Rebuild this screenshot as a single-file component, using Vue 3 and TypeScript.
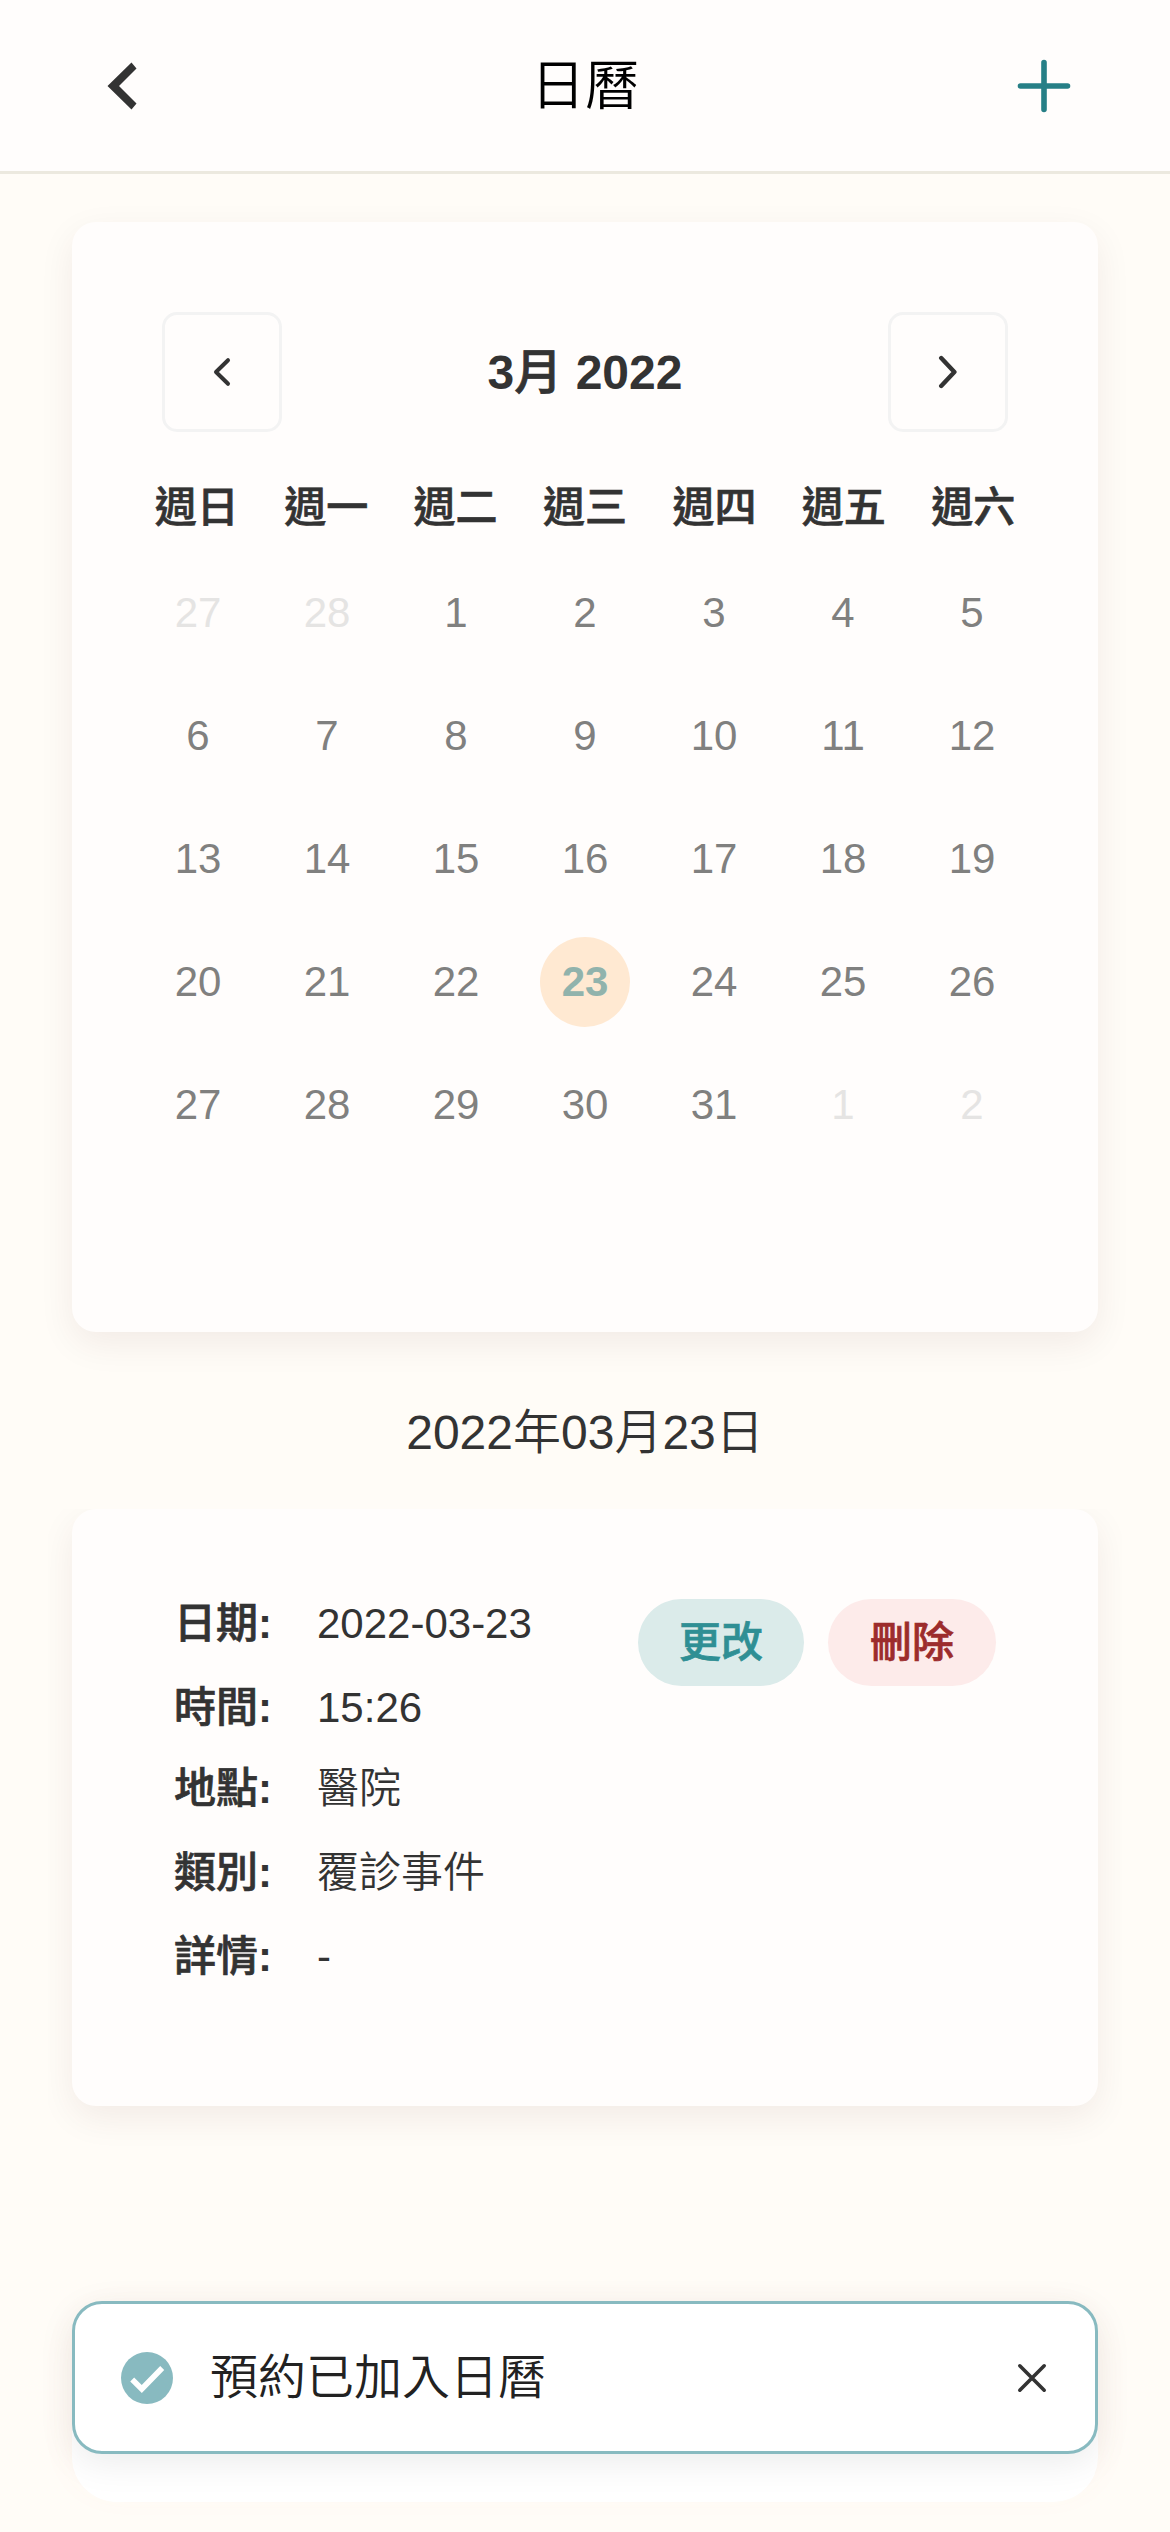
<script setup lang="ts">
interface Day {
  key: string
  label: number
  outside: boolean
  selected: boolean
}

interface Detail {
  label: string
  value: string
}

const weekdays: string[] = ['週日', '週一', '週二', '週三', '週四', '週五', '週六']

// March 2022 starts on a Tuesday, so the grid opens with two days of February.
const days: Day[] = Array.from({ length: 35 }, (_, i) => {
  const date = new Date(2022, 1, 27 + i)
  const outside = date.getMonth() !== 2
  return {
    key: `${date.getMonth()}-${date.getDate()}`,
    label: date.getDate(),
    outside,
    selected: !outside && date.getDate() === 23,
  }
})

const details: Detail[] = [
  { label: '日期', value: '2022-03-23' },
  { label: '時間', value: '15:26' },
  { label: '地點', value: '醫院' },
  { label: '類別', value: '覆診事件' },
  { label: '詳情', value: '-' },
]
</script>

<template>
  <div class="screen">
    <header class="topbar">
      <svg class="back" viewBox="0 0 30 48" width="30" height="48">
        <path d="M24.5 0.5 L29.5 6.5 L12 24 L29.5 41.5 L24.5 47.5 L0.5 24 Z" fill="#333" />
      </svg>
      <h1 class="title">日曆</h1>
      <svg class="add" viewBox="0 0 54 54" width="54" height="54">
        <path d="M27 3.5V50.5M3.5 27H50.5" stroke="#267f86" stroke-width="5.6" stroke-linecap="round" />
      </svg>
    </header>

    <section class="card calendar">
      <div class="month-bar">
        <button class="nav" type="button">
          <svg viewBox="0 0 20 32" width="20" height="32">
            <path d="M16 4.2 L4 16 L16 27.8" fill="none" stroke="#333" stroke-width="4" stroke-linecap="round" stroke-linejoin="round" />
          </svg>
        </button>
        <h2 class="month">3<span class="han">月</span> 2022</h2>
        <button class="nav" type="button">
          <svg viewBox="0 0 20 34" width="20" height="34">
            <path d="M3.2 3 L16.4 17 L3.2 31" fill="none" stroke="#333" stroke-width="4.4" stroke-linecap="round" stroke-linejoin="round" />
          </svg>
        </button>
      </div>
      <div class="weekdays">
        <span v-for="name in weekdays" :key="name" class="han">{{ name }}</span>
      </div>
      <div class="days">
        <div v-for="day in days" :key="day.key" class="cell">
          <span class="day" :class="{ outside: day.outside, selected: day.selected }">{{ day.label }}</span>
        </div>
      </div>
    </section>

    <p class="date">2022年03月23日</p>

    <div class="events">
      <section class="card event">
        <dl class="details">
          <div v-for="item in details" :key="item.label" class="row">
            <dt><span class="han">{{ item.label }}</span>:</dt>
            <dd>{{ item.value }}</dd>
          </div>
        </dl>
        <div class="actions">
          <button class="pill edit" type="button"><span class="han">更改</span></button>
          <button class="pill remove" type="button"><span class="han">刪除</span></button>
        </div>
      </section>
    </div>

    <div class="dock"></div>

    <div class="toast">
      <svg viewBox="0 0 52 52" width="52" height="52">
        <circle cx="26" cy="26" r="26" fill="#88bac0" />
        <path d="M11.2 27.5 L20.8 37 L41.2 16" fill="none" stroke="#fff" stroke-width="5.6" />
      </svg>
      <span class="message">預約已加入日曆</span>
      <svg class="close" viewBox="0 0 30 30" width="30" height="30">
        <path d="M2.8 2.8 L27.2 27.2 M27.2 2.8 L2.8 27.2" stroke="#333" stroke-width="3.6" stroke-linecap="round" />
      </svg>
    </div>
  </div>
</template>

<style>
body {
  margin: 0;
  background: #fffcf7;
}
</style>

<style scoped>
.screen {
  position: relative;
  box-sizing: border-box;
  width: 1170px;
  height: 2532px;
  overflow: hidden;
  background: #fffcf7;
  color: #333;
  font-family: "Liberation Sans", "Noto Sans CJK TC", sans-serif;
}

h1,
h2,
p,
dl,
dd {
  margin: 0;
}

button {
  padding: 0;
  border: 0;
  background: none;
  color: inherit;
  font: inherit;
}

svg {
  display: block;
  flex: none;
}

/* Semibold Chinese: the medium cut, thickened slightly. */
.han {
  font-weight: 500;
  -webkit-text-stroke: 0.7px currentColor;
}

.topbar {
  display: flex;
  align-items: center;
  justify-content: space-between;
  box-sizing: border-box;
  height: 174px;
  padding: 0 99px 0 107px;
  border-bottom: 3px solid #ece9df;
  background: #fffdfc;
}

.back {
  margin-right: 24px;
}

.title {
  margin-right: 8px;
  padding-top: 1px;
  color: #000;
  font-size: 54px;
  font-weight: 350;
  line-height: 72px;
}

.card {
  border-radius: 24px;
  background: #fffdfc;
  box-shadow: 0 12px 36px rgba(70, 20, 10, 0.07);
}

.calendar {
  box-sizing: border-box;
  height: 1110px;
  margin: 48px 72px 0;
  padding: 90px 60px 0;
}

.month-bar {
  display: flex;
  align-items: center;
  justify-content: space-between;
  padding: 0 30px;
}

.nav {
  display: flex;
  align-items: center;
  justify-content: center;
  box-sizing: border-box;
  width: 120px;
  height: 120px;
  border: 3px solid #f3f3f3;
  border-radius: 15px;
}

.month {
  padding-top: 1px;
  font-size: 48px;
  font-weight: 700;
  line-height: 60px;
}

.weekdays {
  display: grid;
  grid-template-columns: repeat(7, 1fr);
  margin-top: 46px;
  font-size: 42px;
  line-height: 60px;
  text-align: center;
}

.days {
  display: grid;
  grid-template-columns: repeat(7, 129px);
  justify-content: center;
  margin-top: 13px;
}

.cell {
  display: flex;
  align-items: center;
  justify-content: center;
  height: 123px;
}

.day {
  width: 90px;
  height: 90px;
  border-radius: 50%;
  color: #80807f;
  font-size: 42px;
  line-height: 90px;
  text-align: center;
}

.day.outside {
  color: #e5e4e3;
}

.day.selected {
  background: #ffe9d2;
  color: #91b3ac;
  font-weight: 700;
}

.date {
  margin-top: 71px;
  font-size: 48px;
  font-weight: 350;
  line-height: 60px;
  text-align: center;
}

.events {
  height: 780px;
  margin: 46px 48px 0;
  padding: 0 24px;
  overflow: hidden;
}

.event {
  display: flex;
  justify-content: space-between;
  box-sizing: border-box;
  height: 597px;
  padding: 90px 102px 0;
}

.details {
  padding-top: 1px;
}

.row {
  display: flex;
  height: 84px;
  font-size: 42px;
  line-height: 48px;
}

.row:nth-child(2) {
  height: 81px;
}

dt {
  width: 143px;
  font-weight: 700;
}

dd {
  font-weight: 350;
}

.actions {
  display: flex;
  gap: 24px;
}

.pill {
  width: 168px;
  height: 87px;
  border-radius: 43.5px;
  font-size: 42px;
  line-height: 84px;
  text-align: center;
}

.edit {
  width: 166px;
  background: #dbebea;
  color: #2f8f94;
}

.remove {
  background: #fdebea;
  color: #9c2c2c;
}

.dock {
  position: absolute;
  left: 72px;
  top: 2322px;
  width: 1026px;
  height: 180px;
  border-radius: 45px;
  background: #fff;
  box-shadow: 0 -12px 36px rgba(255, 120, 90, 0.05);
}

.toast {
  position: absolute;
  left: 72px;
  top: 2301px;
  display: flex;
  align-items: center;
  box-sizing: border-box;
  width: 1026px;
  height: 153px;
  padding: 0 48px 0 46px;
  border: 3px solid #88bac0;
  border-radius: 30px;
  background: #fff;
  box-shadow: 0 9px 36px rgba(0, 0, 0, 0.08);
}

.message {
  flex: 1;
  margin-left: 37px;
  color: #222;
  font-size: 48px;
  font-weight: 350;
  line-height: 60px;
}
</style>
